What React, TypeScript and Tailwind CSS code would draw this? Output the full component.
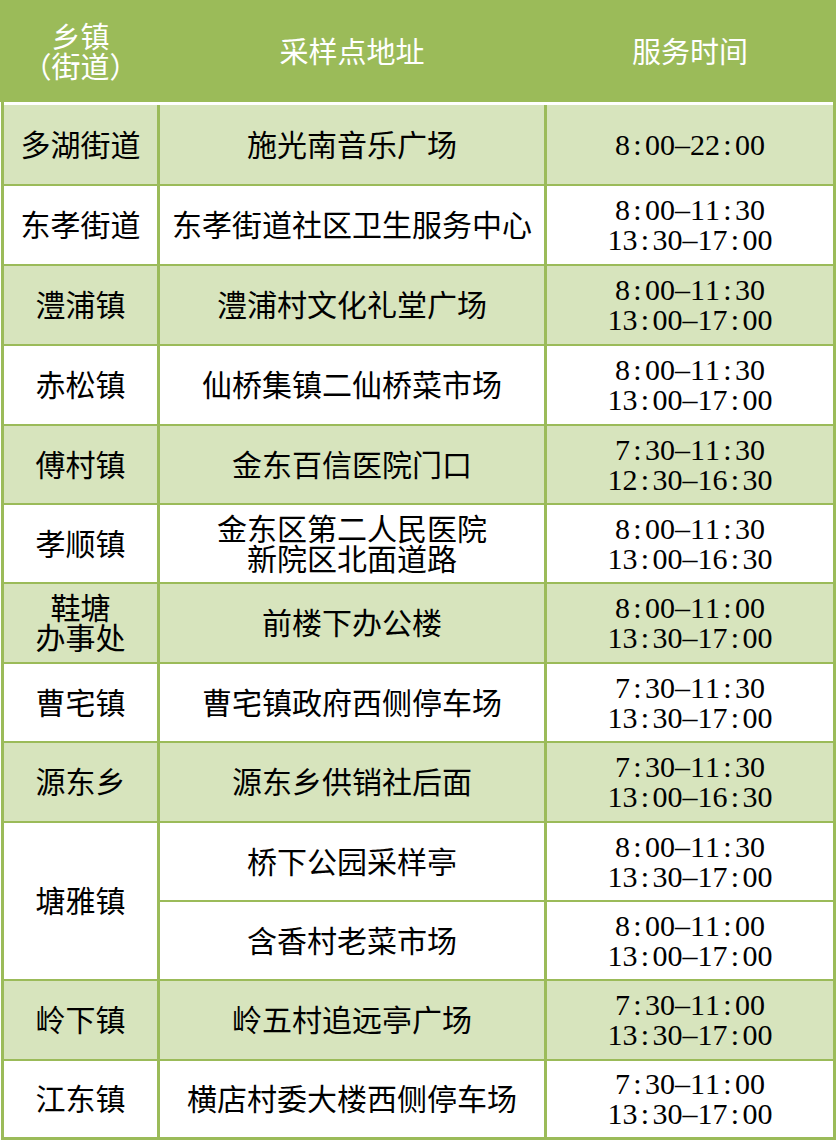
import React from "react";

const GREEN = "bg-[#9BBB59]";

type Row = {
  town?: string[];
  span?: boolean;
  skipTown?: boolean;
  place: string[];
  times: string[];
  light: boolean;
};

const rows: Row[] = [
  { town: ["多湖街道"], place: ["施光南音乐广场"], times: ["8:00-22:00"], light: true },
  { town: ["东孝街道"], place: ["东孝街道社区卫生服务中心"], times: ["8:00-11:30", "13:30-17:00"], light: false },
  { town: ["澧浦镇"], place: ["澧浦村文化礼堂广场"], times: ["8:00-11:30", "13:00-17:00"], light: true },
  { town: ["赤松镇"], place: ["仙桥集镇二仙桥菜市场"], times: ["8:00-11:30", "13:00-17:00"], light: false },
  { town: ["傅村镇"], place: ["金东百信医院门口"], times: ["7:30-11:30", "12:30-16:30"], light: true },
  { town: ["孝顺镇"], place: ["金东区第二人民医院", "新院区北面道路"], times: ["8:00-11:30", "13:00-16:30"], light: false },
  { town: ["鞋塘", "办事处"], place: ["前楼下办公楼"], times: ["8:00-11:00", "13:30-17:00"], light: true },
  { town: ["曹宅镇"], place: ["曹宅镇政府西侧停车场"], times: ["7:30-11:30", "13:30-17:00"], light: false },
  { town: ["源东乡"], place: ["源东乡供销社后面"], times: ["7:30-11:30", "13:00-16:30"], light: true },
  { town: ["塘雅镇"], span: true, place: ["桥下公园采样亭"], times: ["8:00-11:30", "13:30-17:00"], light: false },
  { skipTown: true, place: ["含香村老菜市场"], times: ["8:00-11:00", "13:00-17:00"], light: false },
  { town: ["岭下镇"], place: ["岭五村追远亭广场"], times: ["7:30-11:00", "13:30-17:00"], light: true },
  { town: ["江东镇"], place: ["横店村委大楼西侧停车场"], times: ["7:30-11:00", "13:30-17:00"], light: false },
];

const cjk = "[font-family:'Noto_Sans_CJK_SC',sans-serif]";

function Lines({ lines }: { lines: string[] }) {
  return (
    <div className="text-center">
      {lines.map((t, i) => (
        <React.Fragment key={i}>
          {i > 0 && <br />}
          {t}
        </React.Fragment>
      ))}
    </div>
  );
}

function TimeLine({ s }: { s: string }) {
  const chars = s.replace("-", "–").split("");
  return (
    <div className="whitespace-nowrap">
      {chars.map((c, i) => (
        <span key={i} className="inline-block w-[15px] text-center">
          {c}
        </span>
      ))}
    </div>
  );
}

export default function App() {
  const cells: React.ReactNode[] = [];
  rows.forEach((r, idx) => {
    const bg = r.light ? "bg-[#D7E4BD]" : "bg-white";
    if (!r.skipTown && r.town) {
      cells.push(
        <div
          key={`t${idx}`}
          className={`${bg} ${r.span ? "row-span-2" : ""} flex flex-col items-center justify-center pb-[4px] text-[30px] leading-[30px] text-black ${cjk}`}
        >
          <Lines lines={r.town} />
        </div>
      );
    }
    cells.push(
      <div
        key={`p${idx}`}
        className={`${bg} flex flex-col items-center justify-center pb-[4px] text-[30px] leading-[30px] text-black ${cjk}`}
      >
        <Lines lines={r.place} />
      </div>
    );
    cells.push(
      <div
        key={`h${idx}`}
        className={`${bg} flex flex-col items-center justify-center text-[30px] leading-[30px] text-black [font-family:'Liberation_Serif',serif]`}
      >
        {r.times.map((t, i) => (
          <TimeLine key={i} s={t} />
        ))}
      </div>
    );
  });

  return (
    <div className="w-[836px] h-[1143px] bg-white overflow-hidden">
      <div className={`${GREEN} h-[102px] w-[836px] pl-[4px]`}>
        <div className={`grid grid-cols-[153px_384px_286px] gap-x-[3px] h-full text-white text-[29px] leading-[30px] ${cjk}`}>
          <div className="flex flex-col items-center justify-center pb-[2px]">
            <Lines lines={["乡镇", "（街道）"]} />
          </div>
          <div className="flex items-center justify-center pb-[2px]">采样点地址</div>
          <div className="flex items-center justify-center pb-[2px]">服务时间</div>
        </div>
      </div>
      <div className={`${GREEN} ml-[1px] w-[835px] px-[3px] pb-[3px]`}>
        <div className="h-[3px] bg-white" />
        <div className="grid grid-cols-[153px_384px_286px] grid-rows-[79px_78px_78px_78px_77px_77px_78px_77px_78px_77px_77px_78px_76px] gap-x-[3px] gap-y-[2px]">
          {cells}
        </div>
      </div>
    </div>
  );
}
